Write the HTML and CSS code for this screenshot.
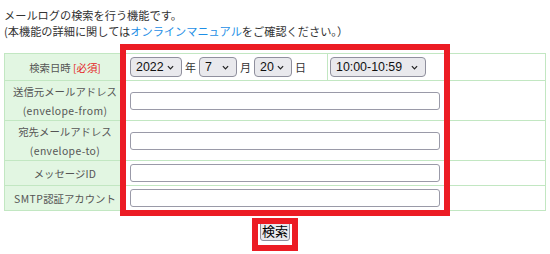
FILE: index.html
```html
<!DOCTYPE html>
<html lang="ja">
<head>
<meta charset="utf-8">
<title>メールログ検索</title>
<link rel="stylesheet" href="styles.css">
</head>
<body>
<div class="page">
  <div class="intro">
    <p>メールログの検索を行う機能です。</p>
    <p>(本機能の詳細に関しては<a class="link" href="#">オンラインマニュアル</a>をご確認ください。）</p>
  </div>
  <table class="form">
    <colgroup>
      <col class="c-label">
      <col class="c-date">
      <col class="c-time">
    </colgroup>
    <tr>
      <th class="label">検索日時 <span class="req">[必須]</span></th>
      <td class="value">
        <div class="date">
          <span class="sel w52"><span>2022</span><svg class="chev" width="8" height="5" viewBox="0 0 8 5"><path d="M1 1 L4 4 L7 1"/></svg></span>
          <span class="unit">年</span>
          <span class="sel w38"><span>7</span><svg class="chev" width="8" height="5" viewBox="0 0 8 5"><path d="M1 1 L4 4 L7 1"/></svg></span>
          <span class="unit">月</span>
          <span class="sel w38"><span>20</span><svg class="chev" width="8" height="5" viewBox="0 0 8 5"><path d="M1 1 L4 4 L7 1"/></svg></span>
          <span class="unit">日</span>
        </div>
      </td>
      <td class="value time">
        <div class="date">
          <span class="sel w96"><span>10:00-10:59</span><svg class="chev" width="8" height="5" viewBox="0 0 8 5"><path d="M1 1 L4 4 L7 1"/></svg></span>
        </div>
      </td>
    </tr>
    <tr>
      <th class="label">送信元メールアドレス<br><span class="en">(envelope-from)</span></th>
      <td class="value" colspan="2"><input class="text" type="text"></td>
    </tr>
    <tr>
      <th class="label">宛先メールアドレス<br><span class="en">(envelope-to)</span></th>
      <td class="value" colspan="2"><input class="text" type="text"></td>
    </tr>
    <tr>
      <th class="label">メッセージ<span class="en">ID</span></th>
      <td class="value" colspan="2"><input class="text" type="text"></td>
    </tr>
    <tr>
      <th class="label"><span class="en">SMTP</span>認証アカウント</th>
      <td class="value" colspan="2"><input class="text" type="text"></td>
    </tr>
  </table>
  <div class="actions">
    <button class="btn" type="button">検索</button>
  </div>
  <div class="mark mark-form"></div>
  <div class="mark mark-btn"></div>
</div>
</body>
</html>
```
FILE: styles.css
```css
html, body {
  margin: 0;
  padding: 0;
  background: #ffffff;
}
body {
  font-family: "Noto Sans CJK JP", "Noto Sans", sans-serif;
  color: #333333;
}
.page {
  position: relative;
  width: 550px;
  height: 254px;
  padding: 7px 4px 0 4px;
  box-sizing: border-box;
}
.intro p {
  margin: 0;
  font-size: 11.2px;
  line-height: 16px;
  white-space: nowrap;
}
.link {
  color: #1e8fe6;
  text-decoration: none;
}
.form {
  margin-top: 14px;
  border-collapse: collapse;
  table-layout: fixed;
  width: 541px;
}
.c-label { width: 121px; }
.c-date { width: 202px; }
.c-time { width: 218px; }
.form th, .form td {
  border: 1px solid #c2e7c2;
  vertical-align: middle;
}
.label {
  background: #e2f6e2;
  font-weight: normal;
  font-size: 10.4px;
  line-height: 19px;
  padding: 1px 2px 0;
  text-align: center;
  color: #555555;
  white-space: nowrap;
}
.en {
  letter-spacing: 0.4px;
}
.req {
  color: #e52222;
}
.value {
  padding: 3px 4px;
  background: #ffffff;
  font-size: 11px;
  line-height: 18px;
}
.value.time {
  padding-left: 2px;
}
.date {
  display: flex;
  align-items: center;
  gap: 2px;
  height: 20px;
}
.unit {
  font-size: 11px;
  line-height: 20px;
  color: #333333;
  margin: 0 1px;
}
.sel {
  display: inline-flex;
  align-items: center;
  justify-content: space-between;
  box-sizing: border-box;
  height: 20px;
  padding: 0 7px 0 5px;
  border: 1px solid #8f8f9d;
  border-radius: 4px;
  background: #e9e9ed;
  font-family: "Liberation Sans", Arial, sans-serif;
  font-size: 12.4px;
  line-height: 18px;
  color: #111111;
}
.w52 { width: 52px; }
.w38 { width: 38px; }
.w96 { width: 96px; }
.chev {
  display: block;
  flex: none;
  width: 7px;
  height: 5px;
}
.chev path {
  fill: none;
  stroke: #222222;
  stroke-width: 1.4;
}
.text {
  display: block;
  box-sizing: border-box;
  width: 310px;
  height: 18px;
  margin: 0;
  padding: 0 3px;
  border: 1px solid #9a9aa8;
  border-radius: 3px;
  background: #ffffff;
}
.actions {
  margin-top: 10px;
  text-align: center;
  line-height: 20px;
}
.btn {
  height: 20px;
  padding: 0 1px;
  border: 1px solid #8f8f9d;
  border-radius: 3px;
  background: #e9e9ed;
  font-family: "Noto Sans CJK JP", sans-serif;
  font-size: 13px;
  line-height: 18px;
  color: #000000;
  vertical-align: top;
}
.mark {
  position: absolute;
  box-sizing: border-box;
  border: 6px solid #ec1c24;
}
.mark-form {
  left: 120px;
  top: 44px;
  width: 330px;
  height: 172px;
}
.mark-btn {
  left: 252px;
  top: 218px;
  width: 46px;
  height: 33px;
}
```
